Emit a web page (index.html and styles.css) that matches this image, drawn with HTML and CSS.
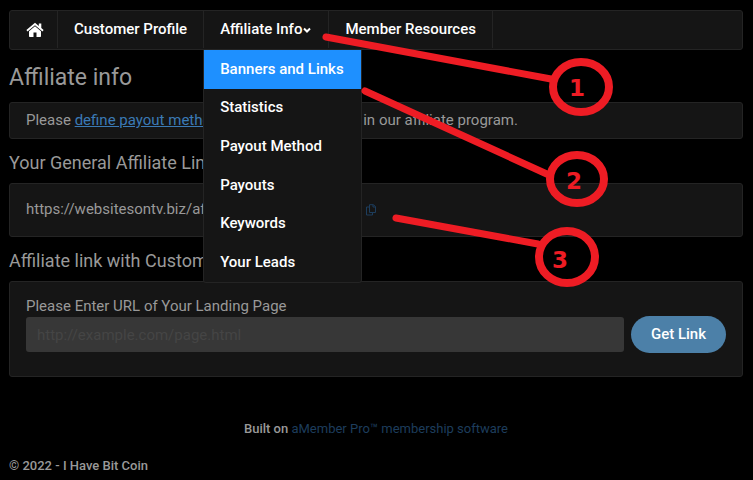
FILE: index.html
```html
<!DOCTYPE html>
<html lang="en">
<head>
<meta charset="utf-8">
<meta name="viewport" content="width=device-width, initial-scale=1">
<title>Affiliate info</title>
<link rel="stylesheet" href="styles.css">
</head>
<body>
<div class="page">
  <nav class="nav" aria-label="Main">
    <a class="nav-link nav-home" href="#" aria-label="Home">
      <svg class="home-icon" viewBox="0 0 18 16" aria-hidden="true">
        <path d="M9 0.8 0.4 8.1 1.5 9.4 9 3.2 16.500 9.400 17.600 8.100 15.300 6.100 V1.400 H12.800 V3.900 Z"/>
        <path d="M9 4.300 3 9.300 V14.200 Q3 15 3.800 15 H7.500 V10.600 H10.500 V15 H14.200 Q15 15 15 14.200 V9.300 Z"/>
      </svg>
    </a>
    <a class="nav-link" href="#">Customer Profile</a>
    <div class="nav-group">
      <a class="nav-link" href="#" aria-expanded="true">Affiliate Info<svg class="chevron" viewBox="0 0 10 8" aria-hidden="true"><path d="M2 2.500 5 5.500 8 2.500"/></svg></a>
      <div class="menu">
        <a class="menu-item menu-item-active" href="#">Banners and Links</a>
        <a class="menu-item" href="#">Statistics</a>
        <a class="menu-item" href="#">Payout Method</a>
        <a class="menu-item" href="#">Payouts</a>
        <a class="menu-item" href="#">Keywords</a>
        <a class="menu-item" href="#">Your Leads</a>
      </div>
    </div>
    <a class="nav-link" href="#">Member Resources</a>
  </nav>

  <main>
    <h1 class="title">Affiliate info</h1>
    <p class="panel notice">Please <a class="link" href="#">define payout method</a> to get a commission in our affiliate program.</p>

    <h2 class="subtitle">Your General Affiliate Link</h2>
    <div class="panel link-panel">
      <span>https://websitesontv.biz/aff/go/ihavebitcoin?i=10</span>
      <button class="copy" type="button" aria-label="Copy link">
        <svg class="copy-icon" viewBox="0 0 12 12" aria-hidden="true">
          <path d="M4.500 0.700 H8.500 L10.500 2.700 V8.500 H4.500 Z M8 0.700 V3 H10.500"/>
          <path d="M4.500 3 H1.500 V11 H7.500 V8.500"/>
        </svg>
      </button>
    </div>

    <h2 class="subtitle">Affiliate link with Custom Landing Page</h2>
    <form class="panel form">
      <label for="url">Please Enter URL of Your Landing Page</label>
      <div class="row">
        <input class="field" id="url" type="text" placeholder="http://example.com/page.html">
        <button class="submit" type="button">Get Link</button>
      </div>
    </form>
  </main>

  <footer class="footer">
    <p class="built">Built on <a class="credit" href="#">aMember Pro™ membership software</a></p>
    <p class="copyright">© 2022 - I Have Bit Coin</p>
  </footer>
</div>

<svg class="callouts" width="640" height="300" viewBox="0 0 640 300" aria-hidden="true">
  <g class="callout-lines">
    <path d="M326 37 551 79"/>
    <path d="M365 91 549 175"/>
    <path d="M396 218 538 244"/>
  </g>
  <g class="callout-rings">
    <ellipse cx="581" cy="87" rx="28" ry="25"/>
    <ellipse cx="577" cy="179" rx="27" ry="24"/>
    <ellipse cx="567" cy="257" rx="28" ry="26"/>
  </g>
  <g class="callout-numbers">
    <text x="577" y="96">1</text>
    <text x="574" y="189">2</text>
    <text x="560" y="268">3</text>
  </g>
</svg>
</body>
</html>
```
FILE: styles.css
```css
* {
  box-sizing: border-box;
}

body {
  margin: 0;
  background: #000;
  color: #999;
  font: 15px/19px Roboto, sans-serif;
  position: relative;
}

h1, h2, p {
  margin: 0;
  font-weight: 400;
}

a {
  text-decoration: none;
}

button {
  border: 0;
  padding: 0;
  background: none;
  font: inherit;
}

.page {
  padding: 10px 10px 0 9px;
}

.nav {
  display: flex;
  height: 40px;
  background: #151515;
  border: 1px solid #242424;
  border-radius: 3px;
}

.nav-link {
  display: flex;
  align-items: center;
  height: 37px;
  padding: 0 16px;
  border-right: 1px solid #242424;
  color: #fff;
  font-weight: 500;
}

.nav-home {
  padding: 0 13px 0 16px;
}

.nav-group {
  position: relative;
}

.home-icon {
  width: 18px;
  height: 16px;
  fill: #fff;
}

.chevron {
  width: 10px;
  height: 8px;
  fill: none;
  stroke: #fff;
  stroke-width: 2;
}

.menu {
  position: absolute;
  z-index: 1;
  top: 39px;
  left: -1px;
  display: grid;
  grid-template-rows: repeat(6, 1fr);
  height: 233px;
  background: #151515;
  border: 1px solid #242424;
  border-top: 0;
  border-radius: 0 0 3px 3px;
  white-space: nowrap;
}

.menu-item {
  display: flex;
  align-items: center;
  padding: 0 17px 0 16px;
  color: #fff;
  font-weight: 500;
}

.menu-item-active {
  background: #1e90ff;
}

.title {
  margin: 12px 0 8px;
  font-size: 23px;
  line-height: 32px;
}

.panel {
  padding: 8px 16px;
  background: #151515;
  border: 1px solid #242424;
  border-radius: 3px;
}

.link {
  color: #3b7ab5;
  text-decoration: underline;
}

.subtitle {
  margin: 12px 0 8px;
  font-size: 18px;
  line-height: 24px;
}

.link-panel {
  display: flex;
  align-items: center;
  gap: 9px;
  padding: 16px 16px 17px;
}

.copy-icon {
  display: block;
  width: 12px;
  height: 12px;
  fill: none;
  stroke: #1d3d5c;
}

.form {
  padding: 15px 16px 23px;
}

.form label {
  display: block;
}

.row {
  display: flex;
  align-items: center;
  gap: 7px;
}

.field {
  flex: 1;
  min-width: 0;
  height: 35px;
  padding: 0 11px;
  border: 0;
  border-radius: 3px;
  background: #373737;
  color: #999;
  font: inherit;
}

.field::placeholder {
  color: #454545;
}

.submit {
  height: 37px;
  padding: 0 20px;
  border-radius: 19px;
  background: #4c80a8;
  color: #fff;
  font-weight: 500;
}

.footer {
  padding-top: 42px;
  font-size: 13px;
}

.built {
  margin-bottom: 18px;
  text-align: center;
  font-weight: 500;
}

.credit {
  color: #1d3d5c;
  font-weight: 400;
}

.copyright {
  font-weight: 500;
}

.callouts {
  position: absolute;
  z-index: 2;
  top: 0;
  left: 0;
  pointer-events: none;
}

.callout-lines {
  fill: none;
  stroke: #ee1c24;
  stroke-width: 7;
  stroke-linecap: round;
}

.callout-rings {
  fill: none;
  stroke: #ee1c24;
  stroke-width: 8;
}

.callout-numbers {
  fill: #ee1c24;
  font: bold 23px "DejaVu Sans", sans-serif;
  text-anchor: middle;
}
```
